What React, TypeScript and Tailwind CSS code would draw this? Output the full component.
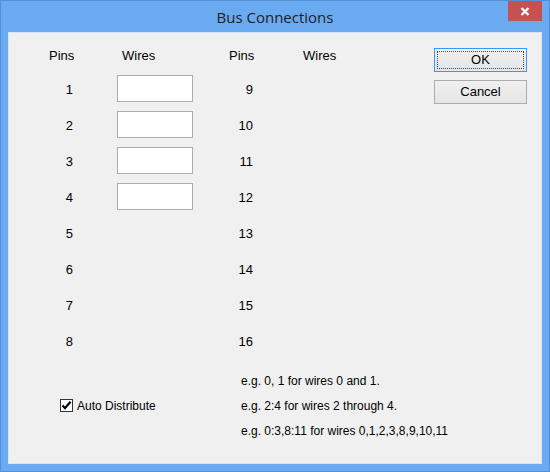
const leftPins = [1, 2, 3, 4, 5, 6, 7, 8];
const rightPins = [9, 10, 11, 12, 13, 14, 15, 16];

const examples = [
  "e.g. 0, 1 for wires 0 and 1.",
  "e.g. 2:4 for wires 2 through 4.",
  "e.g. 0:3,8:11 for wires 0,1,2,3,8,9,10,11",
];

function DialogButton({ label, isDefault }: { label: string; isDefault?: boolean }) {
  return (
    <button
      className={`h-[24px] w-[93px] border bg-gradient-to-b from-[#f0f0f0] to-[#e5e5e5] text-[13px] text-black ${
        isDefault ? "border-[#3399ff] p-[2px]" : "border-[#acacac]"
      }`}
    >
      {isDefault ? (
        <div className="flex h-full w-full items-center justify-center border border-dotted border-[#444]">
          {label}
        </div>
      ) : (
        label
      )}
    </button>
  );
}

function CheckBox() {
  return (
    <span className="flex h-[13px] w-[13px] items-center justify-center border border-[#333] bg-white">
      <svg width="11" height="11" viewBox="0 0 11 11">
        <path d="M1.5 5.5 L4 8.2 L9.5 1.8" fill="none" stroke="#000" strokeWidth="2.2" />
      </svg>
    </span>
  );
}

export default function App() {
  return (
    <div
      className="flex h-[472px] w-[550px] flex-col border border-[#4f8fdc] bg-[#6aaaf1]"
      style={{ fontFamily: '"Liberation Sans", Arial, sans-serif' }}
    >
      {/* title bar */}
      <div className="grid h-[31px] grid-cols-[1fr_auto_1fr]">
        <div />
        <div
          className="pt-[5px] text-[15px] text-[#1e1e1e]"
          style={{ fontFamily: '"Open Sans", "Noto Sans", sans-serif' }}
        >
          Bus Connections
        </div>
        <div className="flex justify-end pr-[7px]">
          <div className="flex h-[20px] w-[34px] items-center justify-center bg-[#c75050]">
            <svg width="10" height="9" viewBox="0 0 10 9">
              <path d="M1.5 1 L8.5 8 M8.5 1 L1.5 8" stroke="#fff" strokeWidth="2.2" />
            </svg>
          </div>
        </div>
      </div>

      {/* client area */}
      <div className="mx-[7px] flex h-[432px] w-[534px] border border-[#d6e4f4] bg-[#f0f0f0] text-[12px] text-black">
        <div className="min-w-0 flex-1 pl-[40px] pt-[7px]">
          <div className="grid grid-cols-[68px_112px_74px_1fr] text-[13px]">
            <div className="flex h-[32px] items-center">Pins</div>
            <div className="flex h-[32px] items-center pl-[5px]">Wires</div>
            <div className="flex h-[32px] items-center">Pins</div>
            <div className="flex h-[32px] items-center">Wires</div>

            {leftPins.map((pin, i) => (
              <div key={pin} className="contents">
                <div className="flex h-[36px] items-center">
                  <span className="w-[24px] text-right">{pin}</span>
                </div>
                <div className="flex h-[36px] items-center">
                  {i < 4 && (
                    <div className="mb-[3px] h-[27px] w-[76px] border border-[#abadb3] bg-white" />
                  )}
                </div>
                <div className="flex h-[36px] items-center">
                  <span className="w-[24px] text-right">{rightPins[i]}</span>
                </div>
                <div />
              </div>
            ))}
          </div>

          <div className="mt-[8px] grid grid-cols-[180px_1fr] items-center">
            <label className="flex items-center gap-[4px] pl-[11px]">
              <CheckBox />
              <span>Auto Distribute</span>
            </label>
            <div className="pl-[12px]">
              {examples.map((line) => (
                <div key={line} className="flex h-[25px] items-center whitespace-nowrap">
                  {line}
                </div>
              ))}
            </div>
          </div>
        </div>

        <div className="mr-[14px] flex w-[93px] shrink-0 flex-col gap-[8px] pt-[15px]">
          <DialogButton label="OK" isDefault />
          <DialogButton label="Cancel" />
        </div>
      </div>
    </div>
  );
}
